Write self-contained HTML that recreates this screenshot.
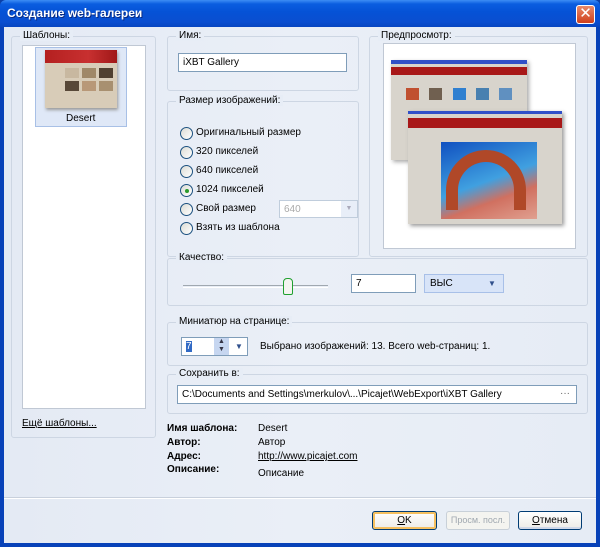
<!DOCTYPE html>
<html><head><meta charset="utf-8"><style>
*{margin:0;padding:0;box-sizing:border-box}
body{width:600px;height:547px;overflow:hidden;font-family:"Liberation Sans","DejaVu Sans",sans-serif;font-size:10px;color:#000;background:#0a3fa8}
.a{position:absolute}
#win{position:absolute;left:0;top:0;width:600px;height:547px;background:#0842b8;border-radius:6px 6px 0 0}
#title{position:absolute;left:0;top:0;width:600px;height:27px;border-radius:6px 6px 0 0;background:linear-gradient(#3d8df5 0,#0a5de0 4px,#0552d6 12px,#0a4ed0 22px,#0845c0 27px)}
#title span{position:absolute;left:7px;top:6px;color:#fff;font-size:12px;font-weight:bold;text-shadow:1px 1px #0a2a80}
#close{position:absolute;left:576px;top:5px;width:19px;height:19px;border:1px solid #fff;border-radius:3px;background:linear-gradient(#e88a6a,#d0401c);color:#fff;font-weight:bold;font-size:15px;text-align:center;line-height:16px}
#body{position:absolute;left:4px;top:27px;width:592px;height:516px;background:linear-gradient(90deg,#e4eaf4,#eaeff7 50%,#e6ecf5)}
.g{position:absolute;border:1px solid #cdd6e3;border-radius:3px}
.gl{position:absolute;top:-7px;left:8px;padding:0 3px;background:#e7edf6;white-space:nowrap}
.inp{position:absolute;background:#fff;border:1px solid #7f9db9;padding:3px 4px;white-space:nowrap}
.rad{position:absolute;width:13px;height:13px;border:1px solid #1c5180;border-radius:50%;background:linear-gradient(135deg,#dcdcd4,#fff)}
.rt{position:absolute;white-space:nowrap}
.btn{position:absolute;height:19px;border:1px solid #003c74;border-radius:3px;background:linear-gradient(#fff,#ecebe6);text-align:center;line-height:17px;white-space:nowrap}
</style></head><body>
<div id="win">
<div id="title"><span>Создание web-галереи</span><div id="close">✕</div></div>
<div id="body"></div>

<div class="g" style="left:11px;top:36px;width:145px;height:402px"><div class="gl">Шаблоны:</div></div>
<div class="a" style="left:22px;top:45px;width:124px;height:364px;background:#fff;border:1px solid #c0c8d4"></div>
<div class="a" style="left:35px;top:47px;width:92px;height:80px;background:#dfe8f7;border:1px solid #a8c0e6"></div>
<div class="a" style="left:45px;top:50px;width:72px;height:58px;background:#d8ccb8;box-shadow:1px 2px 3px #999">
 <div class="a" style="left:0;top:0;width:72px;height:13px;background:linear-gradient(90deg,#b42020,#c83030 60%,#a01818)"></div>
 <div class="a" style="left:20px;top:18px;width:14px;height:10px;background:#c8b8a0"></div>
 <div class="a" style="left:37px;top:18px;width:14px;height:10px;background:#a08868"></div>
 <div class="a" style="left:54px;top:18px;width:14px;height:10px;background:#504030"></div>
 <div class="a" style="left:20px;top:31px;width:14px;height:10px;background:#584838"></div>
 <div class="a" style="left:37px;top:31px;width:14px;height:10px;background:#b89878"></div>
 <div class="a" style="left:54px;top:31px;width:14px;height:10px;background:#a89070"></div>
</div>
<div class="rt" style="left:66px;top:113px">Desert</div>
<div class="rt" style="left:22px;top:418px;text-decoration:underline">Ещё шаблоны...</div>

<div class="g" style="left:167px;top:36px;width:192px;height:55px"><div class="gl">Имя:</div></div>
<div class="inp" style="left:178px;top:53px;width:169px;height:19px">iXBT Gallery</div>

<div class="g" style="left:167px;top:101px;width:192px;height:156px"><div class="gl">Размер изображений:</div></div>
<div class="rad" style="left:180px;top:127px"></div><div class="rt" style="left:196px;top:127px">Оригинальный размер</div>
<div class="rad" style="left:180px;top:146px"></div><div class="rt" style="left:196px;top:146px">320 пикселей</div>
<div class="rad" style="left:180px;top:165px"></div><div class="rt" style="left:196px;top:165px">640 пикселей</div>
<div class="rad" style="left:180px;top:184px"><div class="a" style="left:4px;top:4px;width:4px;height:4px;border-radius:50%;background:#2a9a2a"></div></div><div class="rt" style="left:196px;top:184px">1024 пикселей</div>
<div class="rad" style="left:180px;top:203px"></div><div class="rt" style="left:196px;top:203px">Свой размер</div>
<div class="rad" style="left:180px;top:222px"></div><div class="rt" style="left:196px;top:222px">Взять из шаблона</div>
<div class="inp" style="left:279px;top:200px;width:79px;height:18px;border-color:#c0cddc;color:#aaa">640</div>
<div class="a" style="left:341px;top:201px;width:16px;height:16px;background:#e8eef8;color:#aab;font-size:7px;text-align:center;line-height:16px">▼</div>

<div class="g" style="left:369px;top:36px;width:219px;height:221px"><div class="gl">Предпросмотр:</div></div>
<div class="a" style="left:383px;top:43px;width:193px;height:206px;background:#fff;border:1px solid #c0c8d4">
 <div class="a" style="left:7px;top:16px;width:136px;height:100px;background:#d8d4cc;box-shadow:2px 2px 4px #aaa">
  <div class="a" style="left:0;top:0;width:136px;height:4px;background:#3050c8"></div>
  <div class="a" style="left:0;top:7px;width:136px;height:8px;background:#a81818"></div>
  <div class="a" style="left:15px;top:28px;width:13px;height:12px;background:#c05030"></div>
  <div class="a" style="left:38px;top:28px;width:13px;height:12px;background:#706050"></div>
  <div class="a" style="left:62px;top:28px;width:13px;height:12px;background:#3080d0"></div>
  <div class="a" style="left:85px;top:28px;width:13px;height:12px;background:#4880b0"></div>
  <div class="a" style="left:108px;top:28px;width:13px;height:12px;background:#6090c0"></div>
 </div>
 <div class="a" style="left:24px;top:67px;width:154px;height:113px;background:#d8d4cc;box-shadow:2px 2px 4px #999">
  <div class="a" style="left:0;top:0;width:154px;height:3px;background:#3050c8"></div>
  <div class="a" style="left:0;top:7px;width:154px;height:10px;background:#a81818"></div>
  <div class="a" style="left:33px;top:31px;width:96px;height:77px;background:linear-gradient(160deg,#1050c0,#40a0e0 50%,#d07060 70%,#e0a090)">
   <div class="a" style="left:5px;top:8px;width:80px;height:60px;border:12px solid #b04828;border-bottom:none;border-radius:40px 40px 0 0"></div>
  </div>
 </div>
</div>

<div class="g" style="left:167px;top:258px;width:421px;height:48px"><div class="gl">Качество:</div></div>
<div class="a" style="left:183px;top:285px;width:145px;height:3px;border-top:1px solid #a0a8b0;border-bottom:1px solid #fff"></div>
<div class="a" style="left:283px;top:278px;width:10px;height:17px;background:#f4f4f0;border:1px solid #20a030;border-radius:4px 4px 2px 2px"></div>
<div class="inp" style="left:351px;top:274px;width:65px;height:19px">7</div>
<div class="a" style="left:424px;top:274px;width:80px;height:19px;background:#d8e4f8;border:1px solid #a8c0e8;padding:3px 5px">ВЫС<span class="a" style="left:63px;top:4px;font-size:8px;color:#30508c">▼</span></div>

<div class="g" style="left:167px;top:322px;width:421px;height:44px"><div class="gl">Миниатюр на странице:</div></div>
<div class="inp" style="left:181px;top:337px;width:67px;height:19px"><span style="background:#316ac5;color:#fff">7</span></div>
<div class="a" style="left:214px;top:338px;width:15px;height:17px;background:#c6d6f0;font-size:7px;text-align:center;line-height:8px;color:#334">▲<br>▼</div>
<div class="a" style="left:231px;top:338px;width:16px;height:17px;font-size:8px;color:#30508c;text-align:center;line-height:17px">▼</div>
<div class="rt" style="left:260px;top:341px">Выбрано изображений: 13. Всего web-страниц: 1.</div>

<div class="g" style="left:167px;top:374px;width:421px;height:40px"><div class="gl">Сохранить в:</div></div>
<div class="inp" style="left:177px;top:385px;width:400px;height:19px">C:\Documents and Settings\merkulov\...\Picajet\WebExport\iXBT Gallery<span class="a" style="left:382px;top:2px;color:#666">···</span></div>

<div class="rt" style="left:167px;top:423px;font-weight:bold">Имя шаблона:</div><div class="rt" style="left:258px;top:423px">Desert</div>
<div class="rt" style="left:167px;top:437px;font-weight:bold">Автор:</div><div class="rt" style="left:258px;top:437px">Автор</div>
<div class="rt" style="left:167px;top:451px;font-weight:bold">Адрес:</div><div class="rt" style="left:258px;top:451px;text-decoration:underline">http://www.picajet.com</div>
<div class="rt" style="left:167px;top:464px;font-weight:bold">Описание:</div><div class="rt" style="left:258px;top:468px">Описание</div>

<div class="a" style="left:4px;top:497px;width:592px;height:2px;border-top:1px solid #c8d0dc;border-bottom:1px solid #fff"></div>
<div class="btn" style="left:372px;top:511px;width:65px;box-shadow:inset 0 0 0 2px #f5c060"><u>O</u>K</div>
<div class="btn" style="left:446px;top:511px;width:64px;border-color:#c8d0d8;color:#a0a8b0;background:#f4f4f0;font-size:9px">Просм. посл.</div>
<div class="btn" style="left:518px;top:511px;width:64px;box-shadow:inset 0 -2px 0 #d0d8e8"><u>О</u>тмена</div>
</div>
</body></html>
